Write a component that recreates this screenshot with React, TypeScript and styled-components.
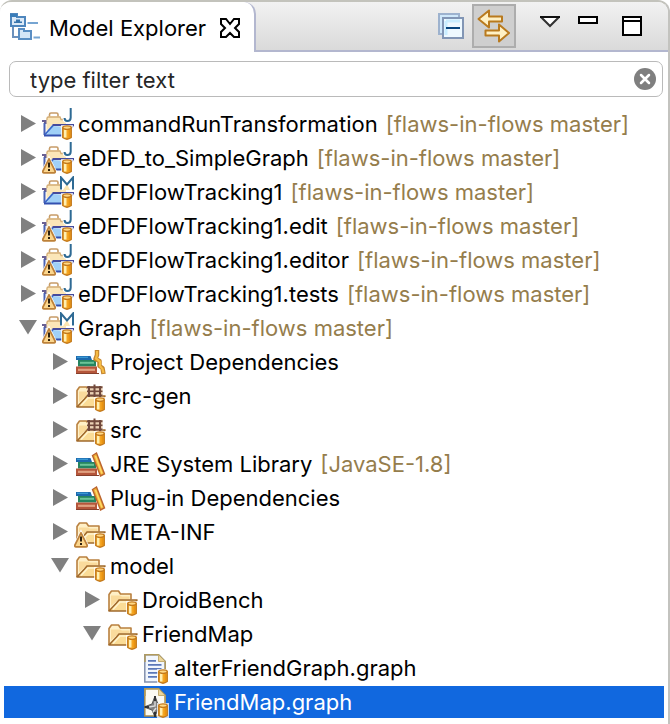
import React, { useState } from 'react';
import styled, { createGlobalStyle, css } from 'styled-components';

const GlobalStyle = createGlobalStyle`
  *, *::before, *::after { box-sizing: border-box; }
  body {
    margin: 0;
    background: #fff;
    color: #000;
    font-family: Inter, "Liberation Sans", sans-serif;
    font-size: 22px;
    line-height: 32px;
  }
  button, input { font: inherit; color: inherit; }
`;

const Panel = styled.main`
  min-height: 100vh;
  background: #fff;
  border-top: 2px solid #c3c3bc;
  border-right: 2px solid #c3c3bf;
  border-top-left-radius: 12px;
  border-top-right-radius: 12px;
  overflow: hidden;
`;

const Header = styled.header`
  display: flex;
  justify-content: space-between;
  height: 50px;
  background: linear-gradient(#f2f2f2, #d9d9d9);
`;

const Tab = styled.div`
  display: flex;
  align-items: center;
  gap: 8px;
  padding: 2px 12px 0 9px;
  background: #fff;
  border-right: 2px solid #b3b7cf;
  border-top-right-radius: 12px;
`;

const Title = styled.h1`
  margin: 0 4px 0 0;
  font-size: 22px;
  font-weight: 400;
  white-space: nowrap;
`;

const IconButton = styled.button`
  display: flex;
  align-items: center;
  justify-content: center;
  flex: none;
  padding: 0;
  border: 0;
  background: none;
`;

const Toolbar = styled.div`
  display: flex;
  flex: 1;
  align-items: flex-start;
  justify-content: flex-end;
  padding: 2px 14px 0 0;
  border-bottom: 2px solid #b3b7cf;
`;

const ToolButton = styled(IconButton)<{ $pressed?: boolean; $narrow?: boolean; $top?: boolean }>`
  width: ${(p) => (p.$narrow ? 32 : 44)}px;
  height: 44px;
  ${(p) =>
    p.$top &&
    css`
      align-items: flex-start;
      padding-top: 12px;
    `}
  ${(p) =>
    p.$pressed &&
    css`
      margin-right: 18px;
      background: #cfcfcf;
      border: 2px solid #adadad;
    `}
`;

const Filter = styled.label`
  display: flex;
  align-items: center;
  height: 36px;
  margin: 9px 5px 11px 9px;
  padding: 0 6px 0 20px;
  background: #fff;
  border: 1px solid #bababa;
  border-radius: 7px;
`;

const FilterInput = styled.input`
  flex: 1;
  min-width: 0;
  padding: 2px 0 0;
  border: 0;
  outline: 0;
  background: none;
  color: #262626;
`;

const Tree = styled.ul`
  list-style: none;
  margin: 0;
  padding: 0 4px;
`;

const Group = styled.ul`
  list-style: none;
  margin: 0;
  padding: 0;
`;

const Row = styled.div<{ $level: number; $selected?: boolean }>`
  display: flex;
  align-items: center;
  height: 32px;
  margin-bottom: 2px;
  padding-left: ${(p) => 12 + p.$level * 32}px;
  white-space: nowrap;
  color: ${(p) => (p.$selected ? '#fff' : '#000')};
  background: ${(p) => (p.$selected ? '#1168df' : 'transparent')};
`;

const Twisty = styled(IconButton)`
  width: 24px;
  height: 32px;
  margin-right: 2px;
`;

const Indent = styled.span`
  flex: none;
  width: 26px;
`;

const Label = styled.span`
  margin-left: 4px;
`;

const Decoration = styled.span`
  margin-left: 8px;
  color: #957d4c;
`;

const Svg = styled.svg`
  display: block;
  flex: none;
`;

type Kind = 'java' | 'modeling' | 'library' | 'jre' | 'source' | 'folder' | 'text' | 'graph';

interface Item {
  name: string;
  kind: Kind;
  note?: string;
  warning?: boolean;
  leaf?: boolean;
  open?: boolean;
  selected?: boolean;
  children?: Item[];
}

const repo = '[flaws-in-flows master]';

const items: Item[] = [
  { name: 'commandRunTransformation', kind: 'java', note: repo },
  { name: 'eDFD_to_SimpleGraph', kind: 'java', note: repo, warning: true },
  { name: 'eDFDFlowTracking1', kind: 'modeling', note: repo },
  { name: 'eDFDFlowTracking1.edit', kind: 'java', note: repo, warning: true },
  { name: 'eDFDFlowTracking1.editor', kind: 'java', note: repo, warning: true },
  { name: 'eDFDFlowTracking1.tests', kind: 'java', note: repo, warning: true },
  {
    name: 'Graph', kind: 'modeling', note: repo, warning: true, open: true,
    children: [
      { name: 'Project Dependencies', kind: 'library' },
      { name: 'src-gen', kind: 'source' },
      { name: 'src', kind: 'source' },
      { name: 'JRE System Library', kind: 'jre', note: '[JavaSE-1.8]' },
      { name: 'Plug-in Dependencies', kind: 'jre' },
      { name: 'META-INF', kind: 'folder', warning: true },
      {
        name: 'model', kind: 'folder', open: true,
        children: [
          { name: 'DroidBench', kind: 'folder' },
          {
            name: 'FriendMap', kind: 'folder', open: true,
            children: [
              { name: 'alterFriendGraph.graph', kind: 'text', leaf: true },
              { name: 'FriendMap.graph', kind: 'graph', leaf: true, selected: true },
            ],
          },
        ],
      },
    ],
  },
];

/* Repository cylinder in the lower right corner of shared resources */
const Cylinder = ({ x = 20 }: { x?: number }) => (
  <g transform={`translate(${x} 17)`}>
    <path d="M-1 0H11V15H-1Z" fill="#fff" opacity=".75" />
    <path d="M.8 2.5V12.5Q5 15.8 9.2 12.5V2.5Z" fill="#f5a623" stroke="#c47a1c" strokeWidth="1.5" />
    <path d="M3.2 4V12.5" stroke="#ffefb0" strokeWidth="2.6" />
    <path d="M7.4 4V12.5" stroke="#ea930f" strokeWidth="1.6" />
    <ellipse cx="5" cy="2.6" rx="4.2" ry="1.8" fill="#ffd884" stroke="#c47a1c" strokeWidth="1.3" />
  </g>
);

const Warning = () => (
  <g>
    <path d="M7 16.6 13.2 29.2Q13.5 30.8 12 30.9H2Q.5 30.8.8 29.2Z" fill="#f9d38c" stroke="#fff" strokeWidth="3" />
    <path d="M7 16.8 13 28.8Q13.6 30.8 12 30.9H2Q.4 30.8 1 28.8Z" fill="#fbd68d" stroke="#bd8139" strokeWidth="1.8" strokeLinejoin="round" />
    <path d="M7 20.5V25.5M7 27V29" stroke="#2c2010" strokeWidth="2" />
  </g>
);

const ProjectFolder = () => (
  <g>
    <path d="M0 12H5V16H2V14H0Z" fill="#6a6092" />
    <path d="M2.500 15V27" stroke="#4a62b4" strokeWidth="2" />
    <path d="M9 16H31L25 27.500H3Z" fill="#bfe0fb" />
    <path d="M10 18 18 19 24 27H5Z" fill="#8cc5f5" opacity=".6" />
    <path d="M7.500 9V6.500Q7.500 5 9 5H14.500Q16 5 16 6.500V9" fill="#fff" stroke="#c79c68" strokeWidth="1.6" />
    <path d="M4.500 10.500Q4.500 8.500 6.500 8.500H18L19 11H24V18.500Q18 19 13.500 17H10L4.500 23Z" fill="#fbe6b8" />
    <path d="M5 12V10.500Q5 9 6.500 9H18L19 11.500H23" fill="none" stroke="#d4ad76" strokeWidth="1.3" />
    <path d="M3 26.500 11 17.500" stroke="#3766c8" strokeWidth="1.8" />
    <path d="M10.500 17H32M31 18 28.500 21" fill="none" stroke="#454b9d" strokeWidth="1.8" />
    <path d="M2 27.500H20" stroke="#3350b0" strokeWidth="2" />
  </g>
);

const Folder = () => (
  <g>
    <path d="M3 27V10.5L5.5 7H12.5L14.5 10H25V15.5" fill="#fff0c7" stroke="#b9803f" strokeWidth="1.6" strokeLinejoin="round" />
    <path d="M5 22V11.5H14L16 12.5H23.5V15L12 16Z" fill="#fadb9c" />
    <path d="M3 27 10.5 19 13 16H31L25.5 27Z" fill="#fbdc96" stroke="#a0692c" strokeWidth="1.6" strokeLinejoin="round" />
    <path d="M7 25.5 14 18H27.5" fill="none" stroke="#fff4cf" strokeWidth="1.5" />
  </g>
);

const PackageGrid = () => (
  <g>
    <path d="M13 6H28.5V16.5H13Z" fill="#ead1b4" />
    <path d="M15 6V17M20.5 4.5V17M26 6V17M13 7.3H28.5M13 15.5H28.5" stroke="#71493c" strokeWidth="2" />
    <path d="M13 11.3H28.5" stroke="#71493c" strokeWidth="1.6" />
  </g>
);

const Books = ({ zigzag }: { zigzag?: boolean }) => (
  <g>
    <path d="M2 10H16.5L18 14H2Z" fill="#1c69ad" />
    <path d="M3 11.3H14" stroke="#3e9ed8" strokeWidth="1.2" />
    <path d="M4 14H22V20.5H4Z" fill="#26845f" />
    <path d="M6 16.8H20" stroke="#6bc498" strokeWidth="2" />
    <path d="M2 20.5H23V28H2Z" fill="#b5563b" />
    <path d="M4 23.8H21" stroke="#e0a180" strokeWidth="2.2" />
    <path d="M2 27.5H25" stroke="#87402c" strokeWidth="1" />
    {zigzag ? (
      <g fill="none">
        <path d="M23 4V9L21.500 13 25.500 15V20L28.500 22 29.500 28" stroke="#c5862f" strokeWidth="4.500" strokeLinejoin="round" />
        <path d="M23 5V9L22 12.500 26 15.500V20L28.500 23 29.500 27" stroke="#f6bb44" strokeWidth="2.2" />
      </g>
    ) : (
      <g>
        <path d="M18.5 7.5 22.5 5 30.5 26 26.5 28Z" fill="#efb036" stroke="#bb642e" strokeWidth="1.4" />
        <path d="M21.5 8 28 25.5" stroke="#ffd968" strokeWidth="1.5" />
      </g>
    )}
  </g>
);

const Page = ({ graph }: { graph?: boolean }) => (
  <g>
    <path d="M6.8 2.8H20.5L27.2 9.5V30H6.8Z" fill={graph ? '#fbfaf2' : '#f1f6fd'} stroke={graph ? '#a68b4e' : '#8290ad'} strokeWidth="1.5" />
    <path d="M7 10V2.8H20.5L27.2 9.5V24" fill="none" stroke="#b19a5c" strokeWidth="1.5" />
    <path d="M20.5 3V9.5H27" fill="#ecd69a" stroke="#c5ad70" />
    {graph ? (
      <g>
        <path d="M17 10 19.5 17 25 21 19.5 24 17 31 14 24 6 21 14 18Z" fill="#808080" stroke="#555" strokeWidth="1" />
        <path d="M17 10V16M7 21H12M17 26V31M21 20H25" stroke="#333" strokeWidth="2" />
        <path d="M17 15V20L11 21M18 22 15 26" stroke="#ddd" strokeWidth="1.4" fill="none" />
      </g>
    ) : (
      <path d="M10 8.8H18M10 12.8H23.5M10 16.8H23.5M10 20.8H20M10 24.8H19" stroke="#5b78b8" strokeWidth="1.8" />
    )}
  </g>
);

const ItemIcon = ({ kind, warning }: { kind: Kind; warning?: boolean }) => {
  const project = kind === 'java' || kind === 'modeling';
  const folder = kind === 'folder' || kind === 'source';
  const file = kind === 'text' || kind === 'graph';
  const books = kind === 'library' || kind === 'jre';
  return (
    <Svg width="32" height="32" viewBox="0 0 32 32" aria-hidden="true">
      {project && <ProjectFolder />}
      {folder && <Folder />}
      {kind === 'source' && <PackageGrid />}
      {books && <Books zigzag={kind === 'library'} />}
      {file && <Page graph={kind === 'graph'} />}
      {kind === 'java' && (
        <>
          <path d="M28.7 1V9.5Q28.7 13 25.3 13Q22.8 13 22.6 10.5" fill="none" stroke="#fff" strokeWidth="4" />
          <path d="M28.7 0V9.5Q28.7 13 25.3 13Q22.6 13 22.6 10" fill="none" stroke="#2e6a94" strokeWidth="2" />
        </>
      )}
      {kind === 'modeling' && (
        <>
          <path d="M18 1H32V14H18Z" fill="#fff" />
          <path d="M21 14 25 8 28 14Z" fill="#fbe5b1" />
          <path d="M19 13.5V1.5L25 8.5 31 1.5V13.5" fill="none" stroke="#2e6a94" strokeWidth="2" />
        </>
      )}
      {!books && <Cylinder x={folder ? 21 : 20} />}
      {warning && <Warning />}
    </Svg>
  );
};

const TreeItem = ({ item, level }: { item: Item; level: number }) => {
  const [open, setOpen] = useState(!!item.open);
  return (
    <li role="treeitem" aria-expanded={item.leaf ? undefined : open} aria-selected={!!item.selected}>
      <Row $level={level} $selected={item.selected}>
        {item.leaf ? (
          <Indent />
        ) : (
          <Twisty type="button" aria-label={`Toggle ${item.name}`} onClick={() => setOpen(!open)}>
            <Svg width="20" height="20" viewBox="0 0 20 20" aria-hidden="true">
              <path d={open ? 'M1 2H19L10 16.5Z' : 'M3 1V18L18 9.5Z'} fill="#808080" />
            </Svg>
          </Twisty>
        )}
        <ItemIcon kind={item.kind} warning={item.warning} />
        <Label>{item.name}</Label>
        {item.note && <Decoration>{item.note}</Decoration>}
      </Row>
      {open && item.children && (
        <Group role="group">
          {item.children.map((child) => (
            <TreeItem key={child.name} item={child} level={level + 1} />
          ))}
        </Group>
      )}
    </li>
  );
};

export default function App() {
  const [filter, setFilter] = useState('type filter text');
  return (
    <>
      <GlobalStyle />
      <Panel>
        <Header>
          <Tab>
            <Svg width="32" height="32" viewBox="0 0 32 32" aria-hidden="true">
              <path d="M4 15V25H11" fill="none" stroke="#6b91bd" strokeWidth="2" />
              <path d="M2 5V2H8V5H16V14H2Z" fill="#dbe9f7" stroke="#4e86bd" strokeWidth="2" />
              <path d="M1 2H8V5H1Z" fill="#397db9" />
              <path d="M5 11H13V9.500H11V7.500H7V9.500H5Z" fill="#3976ad" />
              <path d="M10 19V17H15V19H22V27H10Z" fill="#d5e6f7" stroke="#5a8ec3" strokeWidth="2" />
              <path d="M18.500 11H29M24.500 25.500H31" stroke="#76a5d2" strokeWidth="2" />
            </Svg>
            <Title>Model Explorer</Title>
            <IconButton type="button" aria-label="Close Model Explorer">
              <Svg width="24" height="24" viewBox="0 0 24 24" aria-hidden="true">
                <path d="M3 3H8L12 8 16 3H21V8L17 12 21 16V21H16L12 17 8 21H3V16L7 12 3 8Z" fill="#fff" stroke="#000" strokeWidth="2" />
              </Svg>
            </IconButton>
          </Tab>
          <Toolbar role="toolbar" aria-label="View actions">
            <ToolButton type="button" aria-label="Collapse All">
              <Svg width="28" height="28" viewBox="0 0 28 28" aria-hidden="true">
                <path d="M3 2H23V22H3Z" fill="#cfe8fa" stroke="#9db2ce" strokeWidth="2" />
                <path d="M7 6H27V26H7Z" fill="#eef9ff" stroke="#8296b5" strokeWidth="2" />
                <path d="M10 9H24M10 9V23" stroke="#c9edff" strokeWidth="3" />
                <path d="M10 16H24" stroke="#07457e" strokeWidth="2" />
              </Svg>
            </ToolButton>
            <ToolButton type="button" $pressed aria-label="Link with Editor" aria-pressed="true">
              <Svg width="36" height="36" viewBox="0 0 36 36" aria-hidden="true">
                <g fill="#fff1c5" stroke="#b97a1e" strokeWidth="2" strokeLinejoin="round">
                  <path d="M2.500 11 13 2.500V8.500H26V13.500H13V19.500Z" />
                  <path d="M33 25 23 16.500V22.500H9.500V27.500H23V33.500Z" />
                </g>
              </Svg>
            </ToolButton>
            <ToolButton type="button" $narrow $top aria-label="View Menu">
              <Svg width="20" height="12" viewBox="0 0 20 12" aria-hidden="true">
                <path d="M1 1H19L10 10Z" fill="#fff" stroke="#333" strokeWidth="2" />
                <path d="M0 1H20" stroke="#111" strokeWidth="2" />
              </Svg>
            </ToolButton>
            <ToolButton type="button" $top aria-label="Minimize">
              <Svg width="20" height="8" viewBox="0 0 20 8" aria-hidden="true">
                <path d="M1 1H19V7H1Z" fill="#fff" stroke="#000" strokeWidth="2" />
              </Svg>
            </ToolButton>
            <ToolButton type="button" $top aria-label="Maximize">
              <Svg width="20" height="20" viewBox="0 0 20 20" aria-hidden="true">
                <path d="M1 1H19V19H1Z" fill="#fff" stroke="#000" strokeWidth="2" />
                <path d="M1 5H19" stroke="#000" strokeWidth="2" />
              </Svg>
            </ToolButton>
          </Toolbar>
        </Header>
        <Filter>
          <FilterInput aria-label="Filter" value={filter} onChange={(e) => setFilter(e.target.value)} />
          <IconButton type="button" aria-label="Clear filter" onClick={() => setFilter('')}>
            <Svg width="22" height="22" viewBox="0 0 22 22" aria-hidden="true">
              <circle cx="11" cy="11" r="11" fill="#7f7f7f" />
              <path d="M7 7 15 15M15 7 7 15" stroke="#fff" strokeWidth="2.500" strokeLinecap="round" />
            </Svg>
          </IconButton>
        </Filter>
        <Tree role="tree" aria-label="Model Explorer">
          {items.map((item) => (
            <TreeItem key={item.name} item={item} level={0} />
          ))}
        </Tree>
      </Panel>
    </>
  );
}
